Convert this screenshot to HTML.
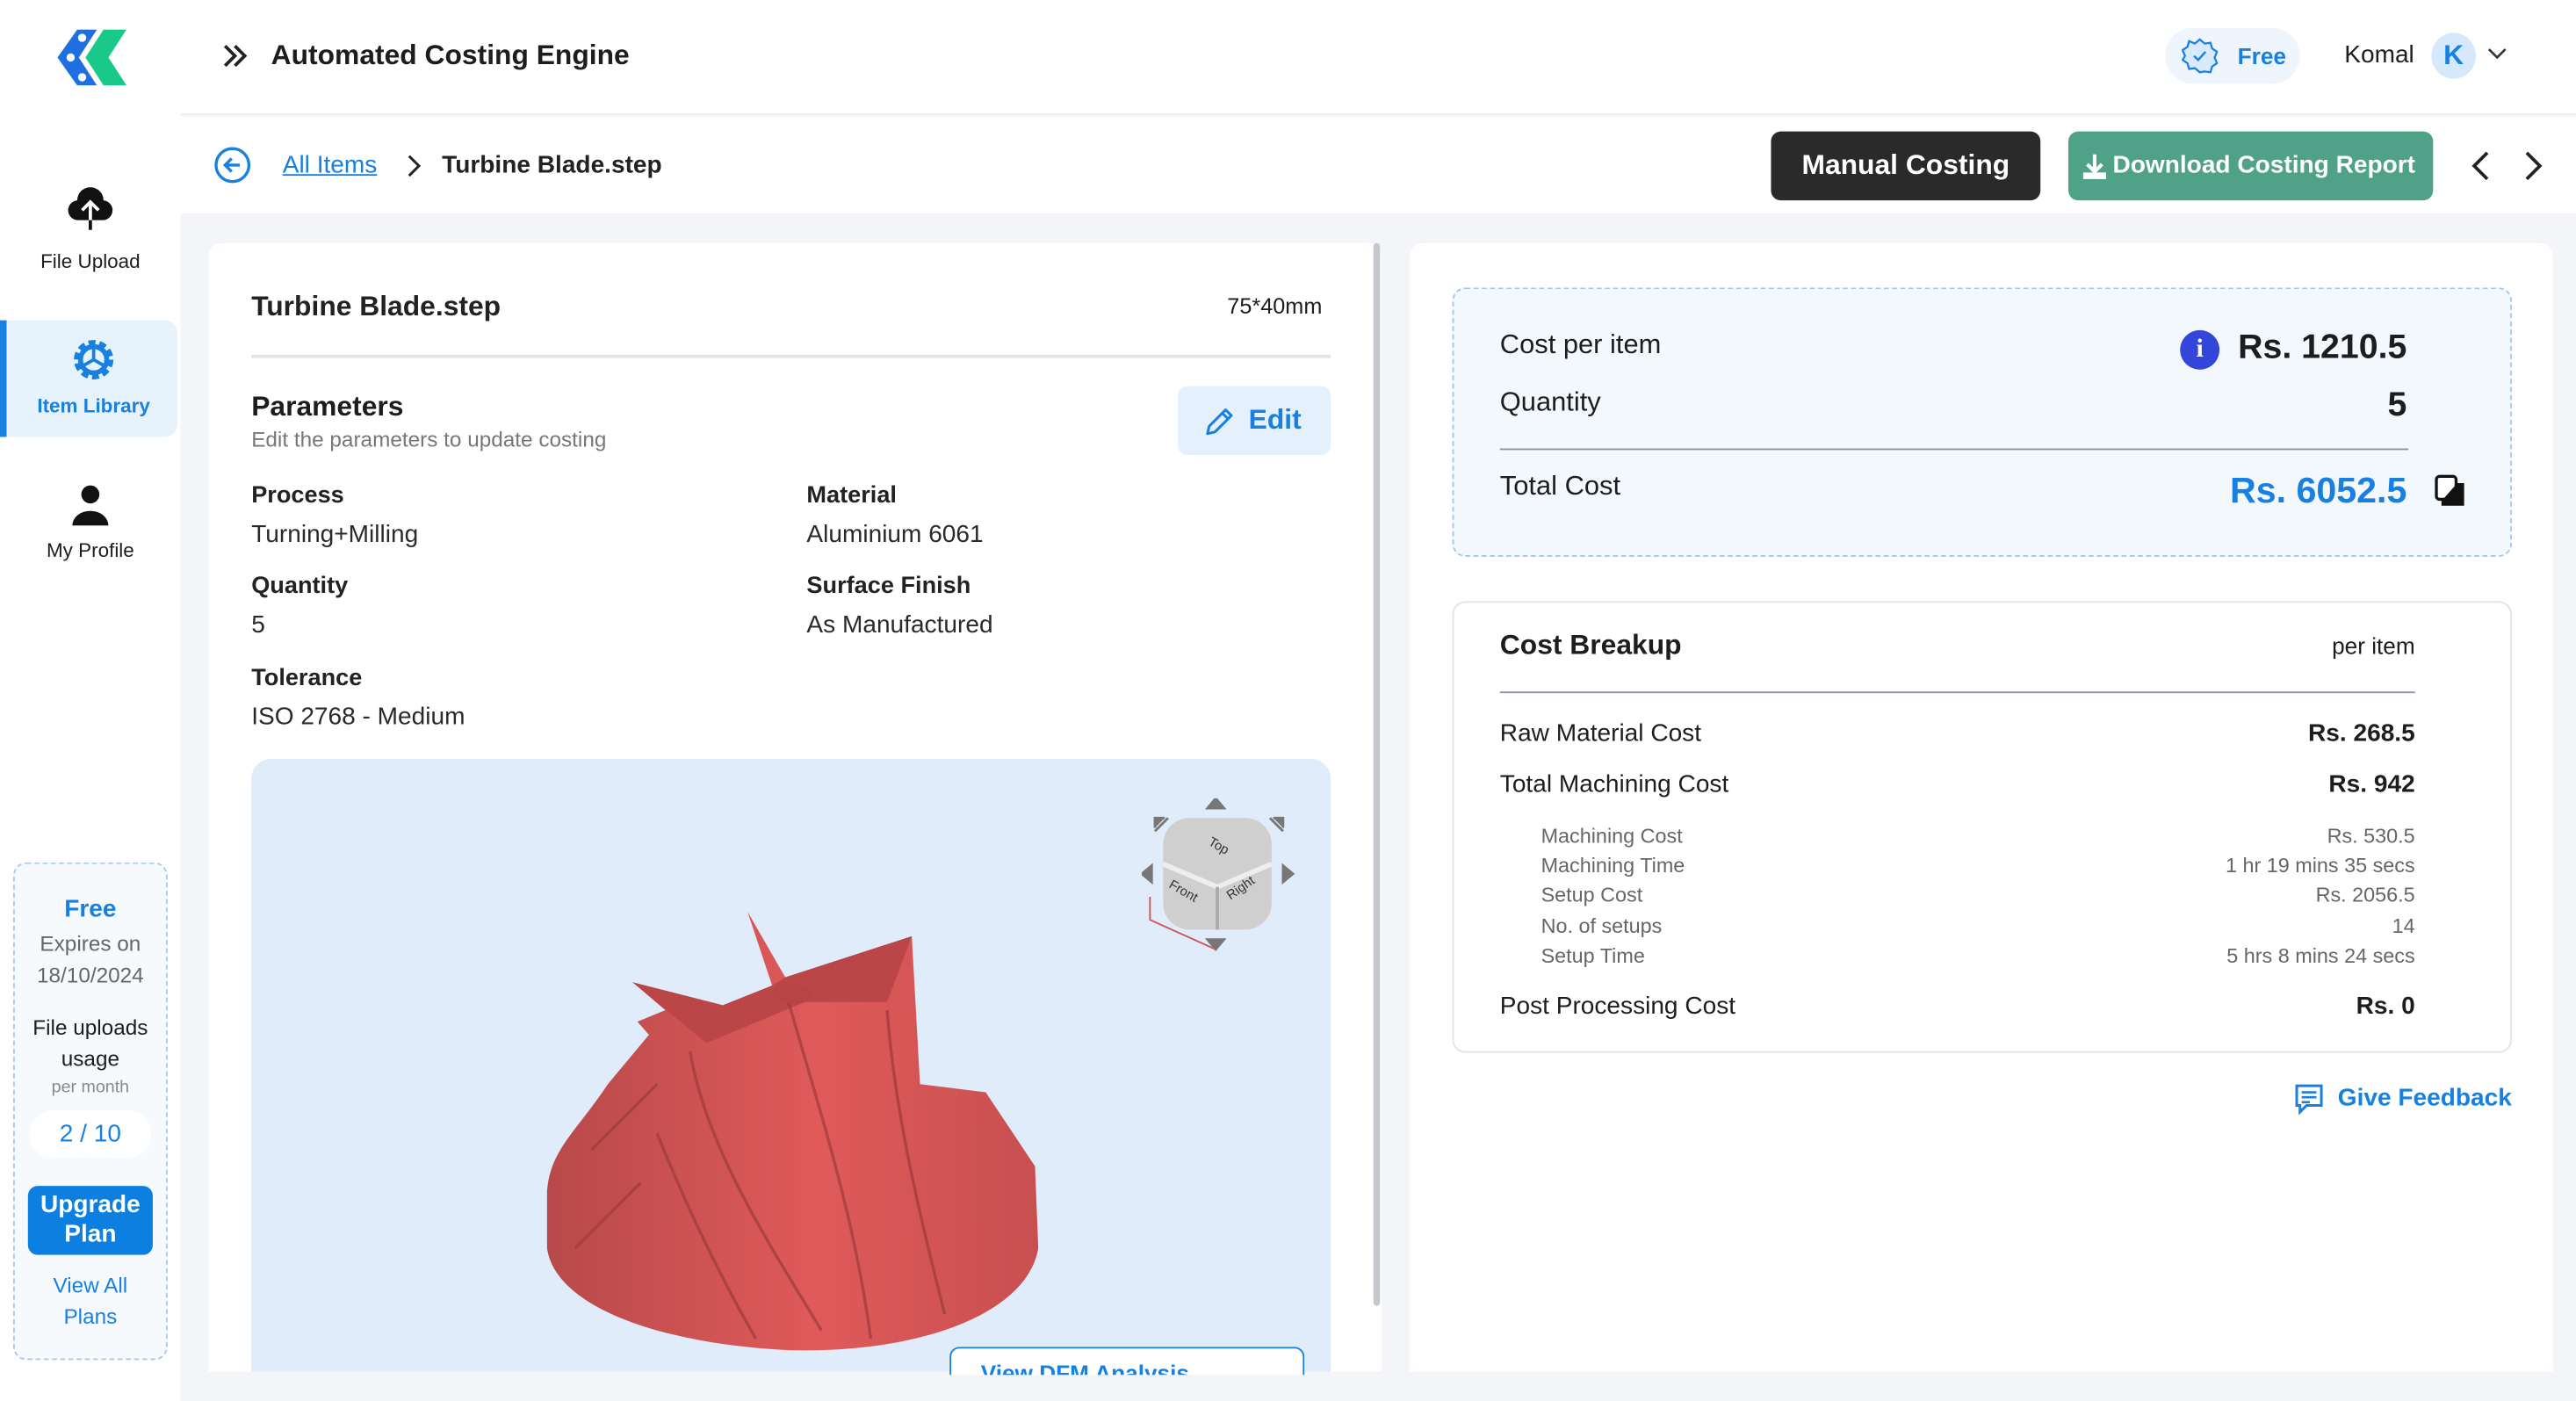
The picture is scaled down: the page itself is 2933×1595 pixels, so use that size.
<!DOCTYPE html>
<html><head><meta charset="utf-8"><style>
html,body{margin:0;padding:0;width:2933px;height:1595px;overflow:hidden;background:#f3f5f8}
#r{position:absolute;left:0;top:0;width:1568px;height:853px;transform:scale(1.87054,1.87);transform-origin:0 0;font-family:"Liberation Sans",sans-serif;color:#1d1d1f;background:#f3f5f8}
.a{position:absolute;white-space:nowrap}
.b{font-weight:bold}
.lbl{font-size:14.5px;font-weight:bold;color:#222}
.val{font-size:15px;color:#2a2a2a}
.sub{font-size:12.5px;color:#666}
</style></head><body><div id="r">
<div class="a" style="left:0;top:0;width:110px;height:853px;background:#fff"></div>
<svg class="a" style="left:33px;top:18px" width="46" height="34" viewBox="0 0 46 34"><path d="M14 0H26L15 17L26 34H14L2 17Z" fill="#1f6fe0"/><path d="M30 0H44L33 17L44 34H30L19 17Z" fill="#18c98a"/><circle cx="17" cy="5" r="2.5" fill="#fff"/><circle cx="17" cy="29" r="2.5" fill="#fff"/><circle cx="10" cy="17" r="2.5" fill="#fff"/></svg>
<svg class="a" style="left:40px;top:114px" width="30" height="28" viewBox="0 0 30 28"><path d="M8 20a6 6 0 0 1-1-12 8 8 0 0 1 16 0 6 6 0 0 1-1 12z" fill="#111"/><path d="M15 26V10M10 14l5-5 5 5" stroke="#fff" stroke-width="2" fill="none"/><path d="M15 20v6" stroke="#111" stroke-width="2"/></svg>
<div class="a" style="left:0;width:110px;top:152px;text-align:center;font-size:12px">File Upload</div>
<div class="a" style="left:0;top:195px;width:108px;height:71px;background:#e6f3fd;border-radius:0 8px 8px 0"></div>
<div class="a" style="left:0;top:195px;width:4px;height:71px;background:#1780e0"></div>
<svg class="a" style="left:42px;top:204px" width="30" height="30" viewBox="0 0 30 30"><circle cx="15" cy="15" r="10" fill="none" stroke="#1780e0" stroke-width="4" stroke-dasharray="4 2.3"/><circle cx="15" cy="15" r="8" fill="none" stroke="#1780e0" stroke-width="3"/><path d="M15 7v8l7 4M15 15l-7 4" stroke="#1780e0" stroke-width="2" fill="none"/></svg>
<div class="a b" style="left:0;width:114px;top:240px;text-align:center;font-size:12px;color:#1780e0">Item Library</div>
<svg class="a" style="left:43px;top:294px" width="24" height="26" viewBox="0 0 24 26"><circle cx="12" cy="7" r="5.5" fill="#111"/><path d="M1 26a11 9 0 0 1 22 0z" fill="#111"/></svg>
<div class="a" style="left:0;width:110px;top:328px;text-align:center;font-size:12px">My Profile</div>
<div class="a" style="left:8px;top:525px;width:92px;height:301px;border:1.5px dashed #a9c9ea;border-radius:8px;background:#f7fafd"></div>
<div style="position:absolute;left:8px;width:94px;top:544px;text-align:center;line-height:19px">
<div class="b" style="font-size:15px;color:#1780e0">Free</div>
<div style="font-size:13px;color:#666;margin-top:2px">Expires on</div>
<div style="font-size:13px;color:#666">18/10/2024</div>
<div style="font-size:13px;margin-top:13px">File uploads</div>
<div style="font-size:13px">usage</div>
<div style="font-size:10.5px;color:#888;line-height:17px">per month</div>
<div style="margin:5px auto 0;width:74px;height:29px;line-height:29px;background:#fff;border-radius:15px;color:#1780e0;font-size:15px">2 / 10</div>
<div class="b" style="margin:17px auto 0;width:76px;height:42px;background:#0c7fe0;border-radius:6px;color:#fff;font-size:15px;line-height:18px;padding-top:3px;box-sizing:border-box">Upgrade<br>Plan</div>
<div style="font-size:13px;color:#1780e0;margin-top:9px">View All</div>
<div style="font-size:13px;color:#1780e0">Plans</div>
</div>
<div class="a" style="left:110px;top:0;width:1458px;height:69px;background:#fff;border-bottom:1.5px solid #eceef1"></div>
<svg class="a" style="left:135px;top:27px" width="16" height="14"><path d="M2 1l6 6-6 6M8 1l6 6-6 6" stroke="#222" stroke-width="2" fill="none"/></svg>
<div class="a b" style="left:165px;top:24px;font-size:17px">Automated Costing Engine</div>
<div class="a" style="left:1318px;top:17px;width:82px;height:34px;background:#eef5fc;border-radius:17px"></div>
<svg class="a" style="left:1328px;top:23px" width="22" height="22" viewBox="0 0 22 22"><path d="M11 1l3 2.5 3.5-.5 1 3.5 3 2-1.5 3.5 1.5 3.5-3 2-1 3.5-3.5-.5L11 21l-3-2.5-3.5.5-1-3.5-3-2L2 11 .5 7.5l3-2 1-3.5L8 3.5z" fill="#d8eafb" stroke="#1780e0" stroke-width="1.2"/><path d="M7.5 11l2.5 2.5 4.5-5" stroke="#1780e0" stroke-width="1.3" fill="none"/></svg>
<div class="a b" style="left:1362px;top:26px;font-size:14px;color:#1780e0">Free</div>
<div class="a" style="left:1427px;top:25px;font-size:15px">Komal</div>
<div class="a b" style="left:1480px;top:20px;width:27px;height:28px;border-radius:50%;background:#d6e8fb;color:#1780e0;text-align:center;line-height:28px;font-size:17px">K</div>
<svg class="a" style="left:1514px;top:29px" width="12" height="8"><path d="M1 1l5 5 5-5" stroke="#333" stroke-width="1.4" fill="none"/></svg>
<div class="a" style="left:110px;top:71px;width:1458px;height:59px;background:#fff"></div>
<svg class="a" style="left:130px;top:89px" width="23" height="23" viewBox="0 0 23 23"><circle cx="11.5" cy="11.5" r="10" fill="none" stroke="#1780e0" stroke-width="1.8"/><path d="M16 11.5H7.5M11 7.5l-4 4 4 4" stroke="#1780e0" stroke-width="1.8" fill="none"/></svg>
<div class="a" style="left:172px;top:92px;font-size:15px;color:#1780e0;text-decoration:underline">All Items</div>
<svg class="a" style="left:247px;top:94px" width="10" height="14"><path d="M2 1l6 6-6 6" stroke="#222" stroke-width="1.6" fill="none"/></svg>
<div class="a" style="left:269px;top:92px;font-size:15px;font-weight:bold;color:#222">Turbine Blade.step</div>
<div class="a b" style="left:1078px;top:80px;width:164px;height:42px;background:#2a2a2a;border-radius:6px;color:#fff;font-size:17px;text-align:center;line-height:42px">Manual Costing</div>
<div class="a b" style="left:1259px;top:80px;width:222px;height:42px;background:#4fa287;border-radius:6px;color:#fff;font-size:15px;line-height:42px;text-indent:27px">Download Costing Report</div>
<svg class="a" style="left:1267px;top:93px" width="16" height="17" viewBox="0 0 16 17"><path d="M8 1v10M3.5 7l4.5 4.5L12.5 7" stroke="#fff" stroke-width="2.2" fill="none"/><path d="M1 12v4h14v-4" fill="#fff"/></svg>
<svg class="a" style="left:1503px;top:91px" width="14" height="20"><path d="M11 2L3 10l8 8" stroke="#222" stroke-width="2" fill="none"/></svg>
<svg class="a" style="left:1535px;top:91px" width="14" height="20"><path d="M3 2l8 8-8 8" stroke="#222" stroke-width="2" fill="none"/></svg>
<div class="a" style="left:127px;top:148px;width:714px;height:687px;background:#fff;border-radius:8px 8px 0 0"></div>
<div class="a" style="left:836px;top:148px;width:4px;height:647px;background:#c4c7cc;border-radius:2px"></div>
<div class="a" style="left:153px;top:177px;font-size:17px;font-weight:bold;color:#222">Turbine Blade.step</div>
<div class="a" style="left:747px;top:179px;font-size:13.5px">75*40mm</div>
<div class="a" style="left:153px;top:216px;width:657px;height:1.5px;background:#e2e4e8"></div>
<div class="a b" style="left:153px;top:238px;font-size:17px">Parameters</div>
<div class="a" style="left:153px;top:260px;font-size:13px;color:#777">Edit the parameters to update costing</div>
<div class="a" style="left:717px;top:235px;width:93px;height:42px;background:#e4f0fb;border-radius:6px"></div>
<svg class="a" style="left:733px;top:247px" width="19" height="19" viewBox="0 0 19 19"><path d="M2 17l1-4.5L13 2.5l3.5 3.5L6.5 16z M11 4.5l3.5 3.5" stroke="#1780e0" stroke-width="1.6" fill="none" stroke-linejoin="round"/></svg>
<div class="a b" style="left:760px;top:246px;font-size:17px;color:#1780e0">Edit</div>
<div class="a lbl" style="left:153px;top:294px">Process</div><div class="a val" style="left:153px;top:317px">Turning+Milling</div>
<div class="a lbl" style="left:491px;top:294px">Material</div><div class="a val" style="left:491px;top:317px">Aluminium 6061</div>
<div class="a lbl" style="left:153px;top:349px">Quantity</div><div class="a val" style="left:153px;top:372px">5</div>
<div class="a lbl" style="left:491px;top:349px">Surface Finish</div><div class="a val" style="left:491px;top:372px">As Manufactured</div>
<div class="a lbl" style="left:153px;top:405px">Tolerance</div><div class="a val" style="left:153px;top:428px">ISO 2768 - Medium</div>
<div class="a" style="left:153px;top:462px;width:657px;height:373px;background:#e1ecfa;border-radius:12px 12px 0 0;overflow:hidden">
<svg width="657" height="373" viewBox="153 462 657 373">
<defs><linearGradient id="g" x1="0" x2="1"><stop offset="0" stop-color="#b8494a"/><stop offset=".55" stop-color="#e05a5a"/><stop offset="1" stop-color="#c84f50"/></linearGradient></defs>
<path d="M333 725C335 700 350 690 370 660L395 630 388 622 405 615 385 598 440 612 470 600 455 555 478 595 555 570 560 660 600 665 630 710 632 760C625 800 560 824 480 822 400 818 338 795 333 760Z" fill="url(#g)"/>
<path d="M385 598L440 612 470 600 478 595 555 570 540 610 490 610 430 635Z" fill="#bb4647"/>
<path d="M420 640C430 700 470 760 500 810M480 610C500 680 520 740 530 815M540 615C545 680 560 740 575 800M400 690C420 740 440 780 460 815M360 700L400 660M350 760L390 720" stroke="#9c3a3b" stroke-width="1.8" fill="none" opacity=".7"/>
<ellipse cx="482" cy="605" rx="12" ry="6" fill="#b84546"/>
</svg></div>
<svg class="a" style="left:695px;top:486px" width="94" height="94" viewBox="0 0 94 94"><path d="M45 0l5 6h-10z M45 92l5-6h-10z M0 46l6-5v10z M92 46l-6-5v10z M8 20l8-8M14 12H8v6 M78 12l8 8M80 12h6v6" fill="#777" stroke="#777" stroke-width="1.5"/><rect x="13" y="12" width="66" height="68" rx="16" fill="#cfcfcf"/><path d="M13 40l33 14 33-14" stroke="#eee" stroke-width="3" fill="none"/><path d="M46 54v26" stroke="#aaa" stroke-width="2"/><path d="M5 60v14l40 18" stroke="#c55" fill="none"/><text x="40" y="28" font-size="8" fill="#333" transform="rotate(30 40 28)">Top</text><text x="16" y="54" font-size="8" fill="#333" transform="rotate(30 16 54)">Front</text><text x="54" y="62" font-size="8" fill="#333" transform="rotate(-35 54 62)">Right</text></svg>
<div class="a" style="left:578px;top:820px;width:214px;height:30px;border:1.5px solid #1780e0;border-radius:6px;background:#fff;clip-path:inset(0 0 15px 0);color:#1780e0;font-size:14px;font-weight:bold;line-height:30px;text-indent:18px">View DFM Analysis</div>
<div class="a" style="left:858px;top:148px;width:696px;height:687px;background:#fff;border-radius:8px 8px 0 0"></div>
<div class="a" style="left:884px;top:175px;width:643px;height:162px;border:1.5px dashed #a3c7ea;border-radius:8px;background:#f3f8fd"></div>
<div class="a" style="left:913px;top:201px;font-size:16.5px">Cost per item</div>
<div class="a" style="left:1327px;top:201px;width:24px;height:24px;border-radius:50%;background:#3446d9;color:#fff;text-align:center;line-height:24px;font-weight:bold;font-family:'Liberation Serif',serif;font-size:16px">i</div>
<div class="a b" style="right:103px;top:200px;font-size:21px">Rs. 1210.5</div>
<div class="a" style="left:913px;top:236px;font-size:16.5px">Quantity</div>
<div class="a b" style="right:103px;top:235px;font-size:21px">5</div>
<div class="a" style="left:913px;top:273px;width:553px;height:1px;background:#8a93a1"></div>
<div class="a" style="left:913px;top:287px;font-size:16.5px">Total Cost</div>
<div class="a b" style="right:103px;top:286px;font-size:22px;color:#1780e0">Rs. 6052.5</div>
<svg class="a" style="left:1482px;top:289px" width="19" height="20"><rect x="1" y="1" width="12" height="14" rx="2" fill="#fff" stroke="#111" stroke-width="1.8"/><path d="M5 15v3h12V6h-4" fill="#111" stroke="#111" stroke-width="1.8"/></svg>
<div class="a" style="left:884px;top:366px;width:643px;height:273px;border:1.5px solid #dde5ee;border-radius:8px"></div>
<div class="a b" style="left:913px;top:383px;font-size:17px">Cost Breakup</div>
<div class="a" style="right:98px;top:385px;font-size:14px">per item</div>
<div class="a" style="left:913px;top:421px;width:557px;height:1px;background:#8a93a1"></div>
<div class="a" style="left:913px;top:438px;font-size:15px">Raw Material Cost</div><div class="a b" style="right:98px;top:438px;font-size:15px">Rs. 268.5</div>
<div class="a" style="left:913px;top:469px;font-size:15px">Total Machining Cost</div><div class="a b" style="right:98px;top:469px;font-size:15px">Rs. 942</div>
<div class="a sub" style="left:938px;top:502px">Machining Cost</div><div class="a sub" style="right:98px;top:502px">Rs. 530.5</div>
<div class="a sub" style="left:938px;top:520px">Machining Time</div><div class="a sub" style="right:98px;top:520px">1 hr 19 mins 35 secs</div>
<div class="a sub" style="left:938px;top:538px">Setup Cost</div><div class="a sub" style="right:98px;top:538px">Rs. 2056.5</div>
<div class="a sub" style="left:938px;top:557px">No. of setups</div><div class="a sub" style="right:98px;top:557px">14</div>
<div class="a sub" style="left:938px;top:575px">Setup Time</div><div class="a sub" style="right:98px;top:575px">5 hrs 8 mins 24 secs</div>
<div class="a" style="left:913px;top:604px;font-size:15px">Post Processing Cost</div><div class="a b" style="right:98px;top:604px;font-size:15px">Rs. 0</div>
<svg class="a" style="left:1396px;top:659px" width="19" height="20" viewBox="0 0 19 20"><path d="M2 2h15v12H8l-4 4v-4H2z" fill="none" stroke="#1780e0" stroke-width="1.6"/><path d="M5 6h9M5 9h9M5 12h5" stroke="#1780e0" stroke-width="1.4"/></svg>
<div class="a b" style="left:1423px;top:660px;font-size:15px;color:#1780e0">Give Feedback</div>
</div></body></html>
